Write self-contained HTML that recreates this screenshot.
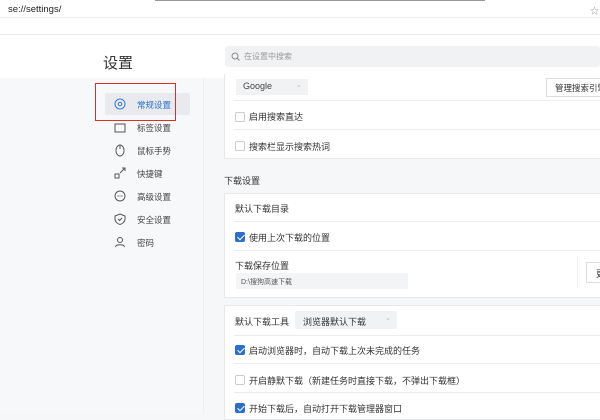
<!DOCTYPE html>
<html><head><meta charset="utf-8"><style>
*{margin:0;padding:0;box-sizing:border-box}
body{width:600px;height:414px;overflow:hidden;background:#f6f7f9;font-family:"Liberation Sans","Noto Sans CJK SC",sans-serif;color:#333;position:relative}
.a{position:absolute}
.t{font-size:9px;color:#333;white-space:nowrap}
.cb{position:absolute;width:10px;height:10px;border:1px solid #ccc;border-radius:2px;background:#fff}
.cb.on{background:#2a6fd0;border-color:#2a6fd0}
.cb.on:after{content:"";position:absolute;left:2.5px;top:0px;width:3px;height:6px;border:solid #fff;border-width:0 1.5px 1.5px 0;transform:rotate(45deg)}
.ln{position:absolute;height:1px;background:#eceef1}
.card{position:absolute;background:#fff;border:1px solid #e6e8eb}
.nav{position:absolute;left:137px;font-size:8.5px;color:#444}
.ic{position:absolute;left:114px}
</style></head><body>
<div class="a" style="left:0;top:0;width:600px;height:34px;background:#fff"></div>
<div class="a" style="left:155px;top:0;width:330px;height:1px;background:#999"></div>
<div class="a t" style="left:8px;top:4px;font-size:9.5px;color:#222">se://settings/</div>
<div class="a" style="left:590px;top:4px;font-size:9px;color:#999">☆</div>
<div class="a" style="left:0;top:17px;width:600px;height:1px;background:#eee"></div>
<div class="a" style="left:0;top:34px;width:600px;height:1px;background:#e8e8e8"></div>
<div class="a" style="left:0;top:35px;width:600px;height:43px;background:#fff"></div>
<div class="a" style="left:0;top:78px;width:203px;height:336px;background:#f7f8fa"></div>
<div class="a" style="left:203px;top:78px;width:1px;height:336px;background:#eceef1"></div>
<div class="a" style="left:103px;top:52px;font-size:15px;color:#333">设置</div>
<div class="a" style="left:225px;top:46px;width:375px;height:21px;background:#f1f2f4;border-radius:3px"></div>
<svg class="a" style="left:231px;top:52px" width="9" height="9"><circle cx="4" cy="4" r="3" fill="none" stroke="#888" stroke-width="1"/><line x1="6.2" y1="6.2" x2="8.5" y2="8.5" stroke="#888"/></svg>
<div class="a t" style="left:244px;top:51px;font-size:8px;color:#999">在设置中搜索</div>
<!-- nav -->
<div class="a" style="left:105px;top:93px;width:85px;height:22px;background:#e8eaee;border-radius:2px"></div>
<div class="a" style="left:95px;top:83px;width:81px;height:38px;border:1.5px solid #d9302a"></div>
<svg class="ic" style="top:98px" width="12" height="12"><circle cx="6" cy="6" r="5" fill="none" stroke="#3a7bd5"/><circle cx="6" cy="6" r="1.8" fill="none" stroke="#3a7bd5"/></svg>
<div class="nav" style="top:99px;color:#2a6fd0">常规设置</div>
<svg class="ic" style="top:122px" width="12" height="12"><rect x="1" y="2" width="10" height="8" fill="none" stroke="#555"/></svg>
<div class="nav" style="top:122px">标签设置</div>
<svg class="ic" style="top:144px" width="12" height="13"><ellipse cx="6" cy="6.5" rx="4" ry="5.5" fill="none" stroke="#555"/><line x1="6" y1="1" x2="6" y2="5" stroke="#555"/></svg>
<div class="nav" style="top:145px">鼠标手势</div>
<svg class="ic" style="top:167px" width="12" height="12"><rect x="1" y="7" width="4" height="4" fill="none" stroke="#555"/><path d="M6 6 L11 1 M8 1 H11 V4" fill="none" stroke="#555"/></svg>
<div class="nav" style="top:168px">快捷键</div>
<svg class="ic" style="top:190px" width="12" height="12"><circle cx="6" cy="6" r="5" fill="none" stroke="#555"/><circle cx="4" cy="6" r=".6" fill="#555"/><circle cx="6" cy="6" r=".6" fill="#555"/><circle cx="8" cy="6" r=".6" fill="#555"/></svg>
<div class="nav" style="top:191px">高级设置</div>
<svg class="ic" style="top:213px" width="12" height="12"><path d="M6 1 L11 3 V6 C11 9 8 11 6 11.5 C4 11 1 9 1 6 V3 Z" fill="none" stroke="#555"/><path d="M4 6 L5.5 7.5 L8 5" fill="none" stroke="#555"/></svg>
<div class="nav" style="top:214px">安全设置</div>
<svg class="ic" style="top:236px" width="12" height="12"><circle cx="6" cy="4" r="2.5" fill="none" stroke="#555"/><path d="M1.5 11 C2 8 10 8 10.5 11" fill="none" stroke="#555"/></svg>
<div class="nav" style="top:237px">密码</div>
<!-- card1 -->
<div class="card" style="left:224px;top:74px;width:380px;height:85px;border-top:none"></div>
<div class="a" style="left:236px;top:79px;width:72px;height:16px;background:#f1f2f4"></div>
<div class="a t" style="left:243px;top:81px;font-size:9px;color:#444">Google</div>
<div class="a t" style="left:296px;top:81px;font-size:7px;color:#bbb">⌄</div>
<div class="a" style="left:546px;top:78px;width:60px;height:19px;border:1px solid #ddd;background:#fff"></div>
<div class="a t" style="left:555px;top:82px;font-size:8.5px">管理搜索引擎</div>
<div class="ln" style="left:234px;top:100px;width:366px"></div>
<div class="cb" style="left:235px;top:112px"></div><div class="a t" style="left:249px;top:110px">启用搜索直达</div>
<div class="ln" style="left:234px;top:129px;width:366px"></div>
<div class="cb" style="left:235px;top:141px"></div><div class="a t" style="left:249px;top:140px">搜索栏显示搜索热词</div>
<div class="a t" style="left:224px;top:174px;font-size:9px">下载设置</div>
<!-- card2 -->
<div class="card" style="left:224px;top:193px;width:380px;height:105px"></div>
<div class="a t" style="left:235px;top:202px">默认下载目录</div>
<div class="ln" style="left:234px;top:221px;width:366px"></div>
<div class="cb on" style="left:235px;top:232px"></div><div class="a t" style="left:249px;top:231px">使用上次下载的位置</div>
<div class="ln" style="left:234px;top:250px;width:366px"></div>
<div class="a t" style="left:235px;top:259px">下载保存位置</div>
<div class="a" style="left:236px;top:273px;width:172px;height:16px;background:#f3f4f6"></div>
<div class="a t" style="left:241px;top:277px;font-size:7px;color:#555">D:\搜狗高速下载</div>
<div class="a" style="left:577px;top:256px;width:1px;height:32px;background:#eee"></div>
<div class="a" style="left:586px;top:262px;width:20px;height:21px;border:1px solid #ddd;background:#fff"></div>
<div class="a t" style="left:596px;top:267px">更</div>
<!-- card3 -->
<div class="card" style="left:224px;top:305px;width:380px;height:115px"></div>
<div class="a t" style="left:235px;top:315px">默认下载工具</div>
<div class="a" style="left:295px;top:311px;width:102px;height:18px;background:#f1f2f4;border-radius:2px"></div>
<div class="a t" style="left:303px;top:315px">浏览器默认下载</div>
<div class="a t" style="left:385px;top:314px;font-size:7px;color:#bbb">⌄</div>
<div class="ln" style="left:234px;top:335px;width:366px"></div>
<div class="cb on" style="left:235px;top:345px"></div><div class="a t" style="left:249px;top:344px">启动浏览器时，自动下载上次未完成的任务</div>
<div class="ln" style="left:234px;top:363px;width:366px"></div>
<div class="cb" style="left:235px;top:375px"></div><div class="a t" style="left:249px;top:374px">开启静默下载（新建任务时直接下载，不弹出下载框）</div>
<div class="ln" style="left:234px;top:392px;width:366px"></div>
<div class="cb on" style="left:235px;top:403px"></div><div class="a t" style="left:249px;top:402px">开始下载后，自动打开下载管理器窗口</div>
</body></html>
